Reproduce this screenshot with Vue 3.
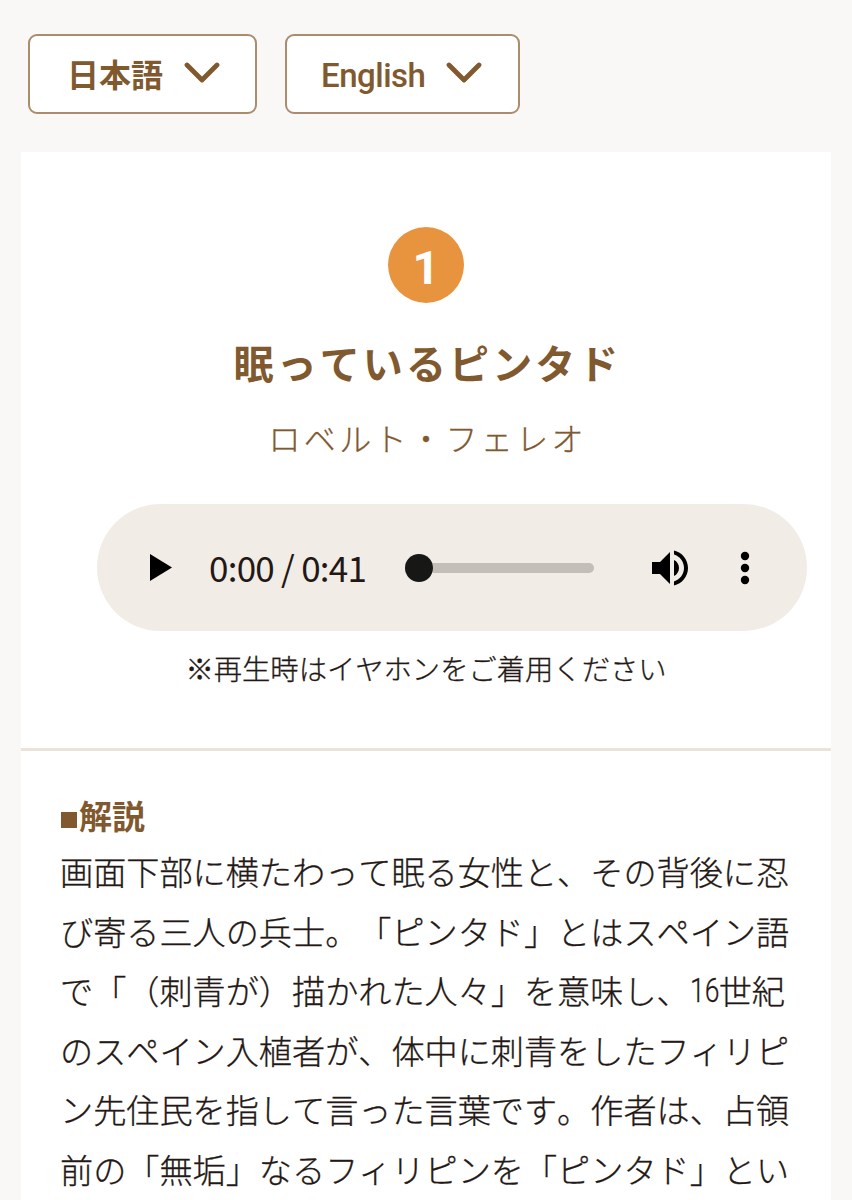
<script setup>
import { ref } from 'vue';

const languages = ref([
  { code: 'ja', label: '日本語' },
  { code: 'en', label: 'English' }
]);

const work = {
  number: 1,
  title: '眠っているピンタド',
  artist: 'ロベルト・フェレオ',
  current: '0:00',
  duration: '0:41'
};

const lines = [
  ['画面下部に横たわって眠る女性と、その背後に忍'],
  ['び寄る三人の兵士。「ピンタド」とはスペイン語'],
  ['で「（刺青が）描かれた人々」を意味し、', '16', '世紀'],
  ['のスペイン入植者が、体中に刺青をしたフィリピ'],
  ['ン先住民を指して言った言葉です。作者は、占領'],
  ['前の「無垢」なるフィリピンを「ピンタド」とい']
];
</script>

<template>
  <div class="page">
    <nav class="languages">
      <button v-for="lang in languages" :key="lang.code" class="language" :class="lang.code">
        <span class="label">{{ lang.label }}</span>
        <svg class="chevron" width="36" height="22" viewBox="0 0 36 22">
          <path d="M3 3L18 18L33 3" />
        </svg>
      </button>
    </nav>

    <main class="card">
      <section class="intro">
        <div class="number">{{ work.number }}</div>
        <h1>{{ work.title }}</h1>
        <p class="artist">{{ work.artist }}</p>

        <div class="player">
          <svg class="play" width="22" height="27" viewBox="0 0 22 27">
            <path d="M0 0L22 13.5L0 27Z" />
          </svg>
          <span class="time">{{ work.current }} / {{ work.duration }}</span>
          <div class="track">
            <div class="thumb"></div>
            <div class="bar"></div>
          </div>
          <svg class="volume" width="48" height="48" viewBox="0 0 24 24">
            <path d="M3 9v6h4l5 5V4L7 9H3zm11-1v8c1.500-.7 2.500-2.200 2.500-4s-1-3.300-2.500-4zM14 3.230v2.060c2.890.86 5 3.540 5 6.710s-2.110 5.850-5 6.710v2.060c4.010-.91 7-4.490 7-8.770s-2.990-7.860-7-8.770z" />
          </svg>
          <svg class="menu" width="48" height="48" viewBox="0 0 24 24">
            <circle cx="12" cy="6" r="2.100" />
            <circle cx="12" cy="12" r="2.100" />
            <circle cx="12" cy="18" r="2.100" />
          </svg>
        </div>

        <p class="notice">※再生時はイヤホンをご着用ください</p>
      </section>

      <section class="description">
        <h2><span class="square"></span>解説</h2>
        <p v-for="(line, i) in lines" :key="i" class="line">
          <span v-for="(part, j) in line" :key="j" :class="{ digits: j === 1 }">{{ part }}</span>
        </p>
      </section>
    </main>
  </div>
</template>

<style>
body {
  background-color: #faf8f7;
  overflow: hidden;
}
</style>

<style scoped>
.page {
  box-sizing: border-box;
  height: 1200px;
  overflow: hidden;
  padding: 34px 21px 0 21px;
  font-family: "Noto Sans CJK JP", sans-serif;
  font-kerning: none;
  color: #231815;
  text-spacing-trim: space-all;
}
.languages {
  display: flex;
  gap: 28px;
  padding-left: 7px;
}
.language {
  box-sizing: border-box;
  display: flex;
  align-items: center;
  width: 229px;
  height: 80px;
  padding: 0 0 0 37px;
  gap: 21px;
  border: 2px solid #a98d6c;
  border-radius: 9px;
  background-color: #fff;
  font-family: inherit;
  font-size: 32px;
  font-weight: 700;
  line-height: 40px;
  color: #80592f;
  white-space: nowrap;
}
.ja .label {
  margin-top: -3px;
}
.en {
  width: 235px;
  padding-left: 34px;
  font-family: Roboto, sans-serif;
  font-size: 33px;
  font-weight: 500;
  letter-spacing: -0.500px;
}
.en .label {
  width: 104px;
  margin-top: 4px;
}
.chevron {
  flex: none;
  margin-top: -2px;
  fill: none;
  stroke: #80592f;
  stroke-width: 4.8;
  stroke-linecap: round;
  stroke-linejoin: round;
}
.card {
  margin-top: 38px;
  height: 1060px;
  background-color: #fff;
}
.intro {
  box-sizing: border-box;
  display: flex;
  flex-direction: column;
  align-items: center;
  height: 599px;
  padding-top: 75px;
  border-bottom: 3px solid #ebe2d9;
}
.number {
  width: 76px;
  height: 76px;
  border-radius: 50%;
  background-color: #e8943f;
  color: #fff;
  font-family: Roboto, sans-serif;
  font-size: 47px;
  font-weight: 700;
  line-height: 82px;
  text-align: center;
}
h1 {
  margin: 29px 0 0;
  font-size: 40px;
  font-weight: 700;
  line-height: 60px;
  letter-spacing: 3.100px;
  text-indent: 3px;
  color: #80592f;
}
.artist {
  margin: 21px 0 0;
  font-size: 32px;
  font-weight: 300;
  line-height: 48px;
  letter-spacing: 3.400px;
  text-indent: 3.400px;
  color: #80592f;
  -webkit-text-stroke: 0.3px #80592f;
}
.player {
  box-sizing: border-box;
  display: flex;
  align-items: center;
  align-self: flex-end;
  flex: none;
  width: 710px;
  height: 127px;
  margin: 43px 24px 0 0;
  padding-left: 53px;
  border-radius: 64px;
  background-color: #f1ece6;
}
.player svg {
  flex: none;
}
.time {
  width: 159px;
  margin: -2px 0 0 37px;
  font-size: 35px;
  letter-spacing: -0.750px;
  white-space: nowrap;
}
.track {
  display: flex;
  align-items: center;
  width: 189px;
  margin-left: 37px;
}
.thumb {
  flex: none;
  width: 28px;
  height: 28px;
  border-radius: 50%;
  background-color: #171716;
}
.bar {
  flex: 1;
  height: 10px;
  border-radius: 0 5px 5px 0;
  background-color: #c3beb8;
}
.volume {
  margin-left: 52px;
}
.menu {
  margin-left: 27px;
}
.notice {
  margin: 16px 0 0;
  font-size: 28.300px;
  font-weight: 300;
  line-height: 42px;
  white-space: nowrap;
  -webkit-text-stroke: 0.3px #231815;
}
.description {
  padding: 38px 39px 0;
}
h2 {
  display: flex;
  align-items: center;
  margin: 0;
  font-size: 33px;
  font-weight: 700;
  line-height: 53px;
  color: #80592f;
}
.square {
  width: 16px;
  height: 16px;
  margin: 9px 2px 0 1px;
  background-color: #80592f;
}
.line {
  display: flex;
  margin: 0;
  font-size: 33.150px;
  font-weight: 300;
  line-height: 59.600px;
  white-space: nowrap;
  -webkit-text-stroke: 0.3px #231815;
}
.digits {
  width: 29px;
  font-family: Roboto, sans-serif;
  transform: scaleX(0.8);
  transform-origin: left;
}
</style>
